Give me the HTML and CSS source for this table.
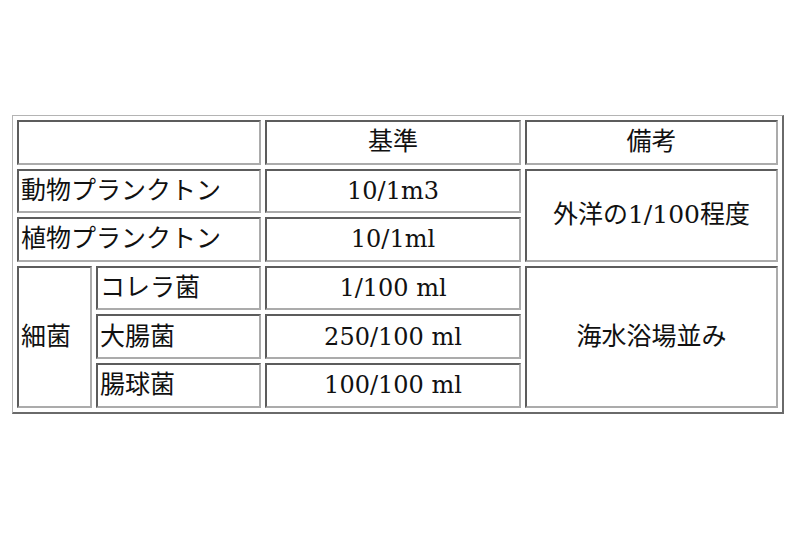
FILE: index.html
```html
<!DOCTYPE html>
<html lang="ja">
<head>
<meta charset="utf-8">
<link rel="stylesheet" href="styles.css">
</head>
<body>
<div class="page">
<table class="grid">
  <colgroup>
    <col class="c1"><col class="c2"><col class="c3"><col class="c4">
  </colgroup>
  <tr>
    <td colspan="2"></td>
    <td class="center ja">基準</td>
    <td class="center ja">備考</td>
  </tr>
  <tr>
    <td class="ja" colspan="2">動物プランクトン</td>
    <td class="center">10/1m3</td>
    <td class="center ja" rowspan="2">外洋の1/100程度</td>
  </tr>
  <tr>
    <td class="ja" colspan="2">植物プランクトン</td>
    <td class="center">10/1ml</td>
  </tr>
  <tr>
    <td class="ja" rowspan="3">細菌</td>
    <td class="ja">コレラ菌</td>
    <td class="center">1/100 ml</td>
    <td class="center ja" rowspan="3">海水浴場並み</td>
  </tr>
  <tr>
    <td class="ja">大腸菌</td>
    <td class="center">250/100 ml</td>
  </tr>
  <tr>
    <td class="ja">腸球菌</td>
    <td class="center">100/100 ml</td>
  </tr>
</table>
</div>
</body>
</html>
```
FILE: styles.css
```css
html, body {
  margin: 0;
  padding: 0;
  background: #ffffff;
}
.page {
  padding: 115px 0 0 12px;
}
.grid {
  table-layout: fixed;
  width: 772px;
  border-collapse: separate;
  border-spacing: 4px 4.6px;
  border-style: solid;
  border-width: 1px 2px 2px 1px;
  border-color: #b4b4b4 #6a6a6a #6a6a6a #b4b4b4;
  font-family: "DejaVu Serif", "Noto Sans CJK JP", serif;
  font-size: 24px;
  color: #111111;
}
.c1 { width: 75px; }
.c2 { width: 165px; }
.c3 { width: 256px; }
.c4 { width: 253px; }
.grid td {
  height: 44.6px;
  box-sizing: border-box;
  padding: 0 2px;
  line-height: 30px;
  border-style: solid;
  border-width: 2px;
  border-color: #5c5c5c #ababab #ababab #5c5c5c;
  text-align: left;
  vertical-align: middle;
  white-space: nowrap;
}
.grid td.ja {
  font-size: 25px;
}
.grid td.center {
  text-align: center;
}
```
